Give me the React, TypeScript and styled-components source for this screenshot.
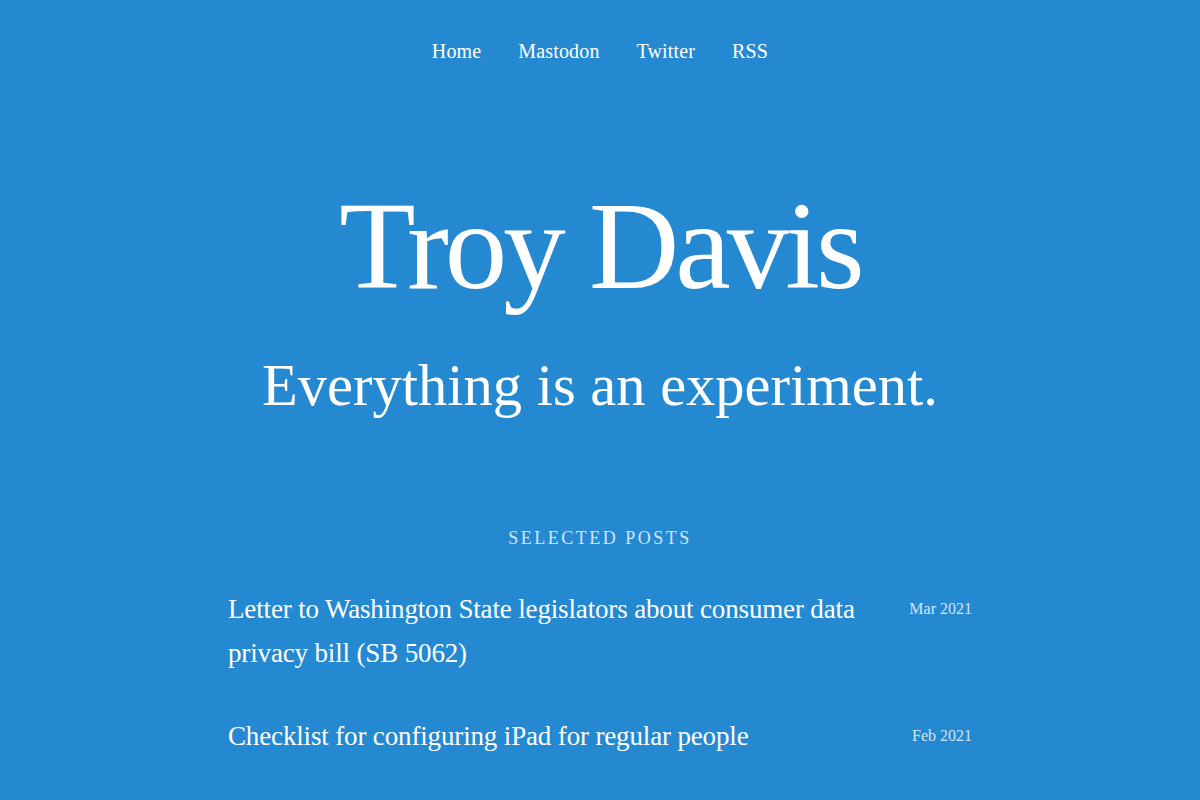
import React from "react";
import styled, { createGlobalStyle } from "styled-components";

const Global = createGlobalStyle`
  html, body {
    margin: 0;
    padding: 0;
    background: #2589d1;
  }
  body {
    font-family: "Liberation Serif", "Times New Roman", serif;
    color: #ffffff;
  }
  a {
    color: inherit;
    text-decoration: none;
  }
`;

const Page = styled.div`
  min-height: 800px;
  background: #2589d1;
  display: flex;
  flex-direction: column;
  align-items: center;
`;

const Nav = styled.nav`
  display: flex;
  justify-content: center;
  gap: 37px;
  padding-top: 36px;
`;

const NavLink = styled.a`
  font-size: 20px;
  line-height: 30px;
  letter-spacing: 0.15px;
`;

const Title = styled.h1`
  margin: 118px 0 0;
  font-size: 125px;
  line-height: 125px;
  font-weight: 400;
  letter-spacing: -4px;
  text-align: center;
`;

const Tagline = styled.h2`
  margin: 42px 0 0;
  font-size: 58.5px;
  line-height: 70px;
  font-weight: 400;
  text-align: center;
`;

const SectionLabel = styled.h3`
  margin: 104px 0 0;
  font-size: 18px;
  line-height: 27px;
  font-weight: 400;
  letter-spacing: 2.5px;
  text-transform: uppercase;
  color: rgba(255, 255, 255, 0.8);
  text-align: center;
`;

const PostList = styled.ul`
  list-style: none;
  margin: 35px 0 0;
  padding: 0;
  width: 744px;
  display: flex;
  flex-direction: column;
  gap: 39px;
`;

const PostRow = styled.li`
  display: flex;
  justify-content: space-between;
  align-items: flex-start;
  gap: 40px;
`;

const PostTitle = styled.a`
  font-size: 27px;
  line-height: 44px;
  letter-spacing: -0.15px;
  max-width: 640px;
`;

const PostDate = styled.span`
  flex-shrink: 0;
  font-size: 16px;
  line-height: 44px;
  color: rgba(255, 255, 255, 0.8);
`;

const posts = [
  {
    title:
      "Letter to Washington State legislators about consumer data privacy bill (SB 5062)",
    date: "Mar 2021",
  },
  { title: "Checklist for configuring iPad for regular people", date: "Feb 2021" },
];

export default function App() {
  return (
    <>
      <Global />
      <Page>
        <Nav>
          <NavLink href="#">Home</NavLink>
          <NavLink href="#">Mastodon</NavLink>
          <NavLink href="#">Twitter</NavLink>
          <NavLink href="#">RSS</NavLink>
        </Nav>
        <Title>Troy Davis</Title>
        <Tagline>Everything is an experiment.</Tagline>
        <SectionLabel>Selected Posts</SectionLabel>
        <PostList>
          {posts.map((p) => (
            <PostRow key={p.title}>
              <PostTitle href="#">{p.title}</PostTitle>
              <PostDate>{p.date}</PostDate>
            </PostRow>
          ))}
        </PostList>
      </Page>
    </>
  );
}
